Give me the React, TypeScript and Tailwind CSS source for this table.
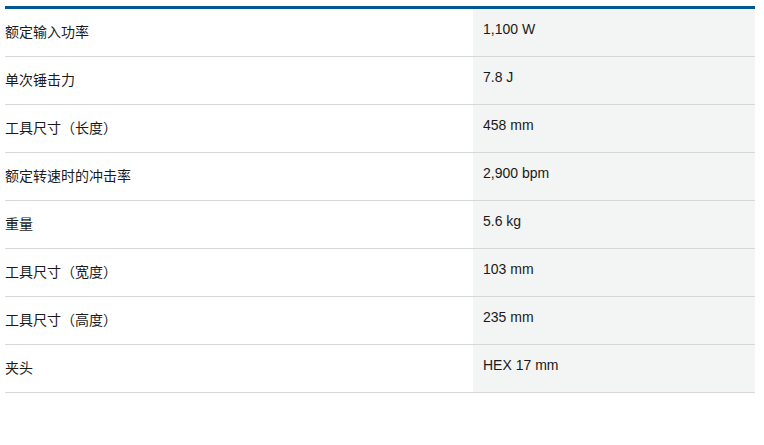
const specs = [
  ["额定输入功率", "1,100 W"],
  ["单次锤击力", "7.8 J"],
  ["工具尺寸（长度）", "458 mm"],
  ["额定转速时的冲击率", "2,900 bpm"],
  ["重量", "5.6 kg"],
  ["工具尺寸（宽度）", "103 mm"],
  ["工具尺寸（高度）", "235 mm"],
  ["夹头", "HEX 17 mm"],
];

const App = () => {
  return (
    <div className="w-[764px] h-[445px] bg-white pt-[6px] px-[5px] font-['Liberation_Sans','Noto_Sans_CJK_SC',sans-serif] text-[14px] text-[#1a1a1a]">
      <div className="w-[750px] border-t-[3px] border-[#005691]">
        {specs.map(([label, value]) => (
          <div key={label} className="flex h-12 border-b border-[#d6d8d8]">
            <div className="w-[468px] flex items-center">{label}</div>
            <div className="flex-1 bg-[#f3f4f4] pl-[10px] pt-[10px] leading-5">{value}</div>
          </div>
        ))}
      </div>
    </div>
  );
};

export default App;
